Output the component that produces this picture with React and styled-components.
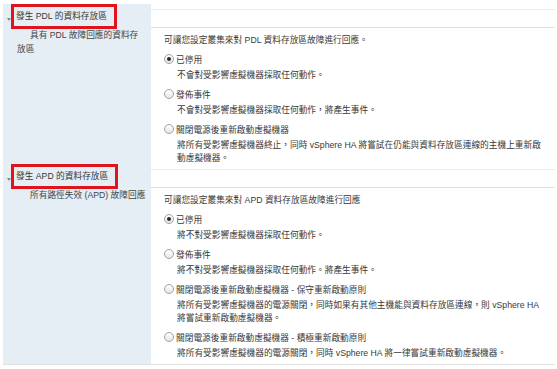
import React from "react";
import styled, { createGlobalStyle } from "styled-components";

const GlobalStyle = createGlobalStyle`
  body {
    margin: 0;
    background: #ffffff;
    font-family: "Liberation Sans", "Noto Sans CJK TC", sans-serif;
    font-size: 8.7px;
    color: #383838;
  }
`;

const Page = styled.div`
  padding: 4px 2px 0 3px;
`;

const Table = styled.div`
  background: linear-gradient(to right, #e5edf5 148px, #ffffff 148px);
  padding-top: 5px;
  border-bottom: 1px solid #e2e2e2;
`;

const HeaderRow = styled.div`
  display: grid;
  grid-template-columns: 148px 1fr;
  align-items: start;
`;

const HeaderCell = styled.div`
  display: flex;
  align-items: flex-start;
  padding-left: 4px;
`;

const Caret = styled.span`
  width: 0;
  height: 0;
  margin-top: 9px;
  border-left: 2.5px solid transparent;
  border-right: 2.5px solid transparent;
  border-top: 3px solid #8a8a8a;
`;

const TitleBox = styled.span`
  display: inline-block;
  border: 3px solid #e0141c;
  padding: 3px 7px 3px 2px;
  margin: -5px 0 -2px 0;
  line-height: 13px;
  white-space: nowrap;
`;

const Band = styled.div`
  height: 17px;
  border-top: 1px solid #ececec;
  border-bottom: 1px solid #dedede;
`;

const BodyRow = styled.div`
  display: grid;
  grid-template-columns: 148px 1fr;
`;

const SideLabel = styled.div`
  padding: 0 4px 0 14px;
  line-height: 14px;
  color: #444444;
  white-space: nowrap;

  & > span:first-child {
    padding-left: 13px;
  }
`;

const Content = styled.div`
  padding: 6px 2px 0 13px;
`;

const Intro = styled.div`
  line-height: 13px;
  margin-bottom: 4px;
`;

const Option = styled.div`
  margin-bottom: 4px;
`;

const OptionLabel = styled.div`
  display: flex;
  align-items: center;
  gap: 2px;
  height: 16px;
`;

const Radio = styled.span`
  box-sizing: border-box;
  width: 10px;
  height: 10px;
  border-radius: 50%;
  border: 1px solid #a3a3a3;
  background: linear-gradient(#ffffff, #e6e6e6);
  display: flex;
  align-items: center;
  justify-content: center;

  &::after {
    content: "";
    width: 4px;
    height: 4px;
    border-radius: 50%;
    background: ${(props) => (props.checked ? "#2b2b2b" : "transparent")};
  }
`;

const Desc = styled.div`
  padding-left: 13px;
  margin-top: 2px;
  line-height: 13px;
  white-space: nowrap;
`;

const Lines = ({ lines }) =>
  lines.map((line, i) => (
    <React.Fragment key={i}>
      {i > 0 && <br />}
      <span>{line}</span>
    </React.Fragment>
  ));

const sections = [
  {
    title: "發生 PDL 的資料存放區",
    label: ["具有 PDL 故障回應的資料存", "放區"],
    intro: "可讓您設定叢集來對 PDL 資料存放區故障進行回應。",
    options: [
      { name: "已停用", desc: ["不會對受影響虛擬機器採取任何動作。"], checked: true },
      { name: "發佈事件", desc: ["不會對受影響虛擬機器採取任何動作，將產生事件。"] },
      {
        name: "關閉電源後重新啟動虛擬機器",
        desc: [
          "將所有受影響虛擬機器終止，同時 vSphere HA 將嘗試在仍能與資料存放區連線的主機上重新啟",
          "動虛擬機器。",
        ],
      },
    ],
  },
  {
    title: "發生 APD 的資料存放區",
    label: ["所有路徑失效 (APD) 故障回應"],
    intro: "可讓您設定叢集來對 APD 資料存放區故障進行回應",
    options: [
      { name: "已停用", desc: ["將不對受影響虛擬機器採取任何動作。"], checked: true },
      { name: "發佈事件", desc: ["將不對受影響虛擬機器採取任何動作。將產生事件。"] },
      {
        name: "關閉電源後重新啟動虛擬機器 - 保守重新啟動原則",
        desc: [
          "將所有受影響虛擬機器的電源關閉，同時如果有其他主機能與資料存放區連線，則 vSphere HA",
          "將嘗試重新啟動虛擬機器。",
        ],
      },
      {
        name: "關閉電源後重新啟動虛擬機器 - 積極重新啟動原則",
        desc: ["將所有受影響虛擬機器的電源關閉，同時 vSphere HA 將一律嘗試重新啟動虛擬機器。"],
      },
    ],
  },
];

const App = () => {
  return (
    <Page>
      <GlobalStyle />
      <Table>
        {sections.map((section) => (
          <React.Fragment key={section.title}>
            <HeaderRow>
              <HeaderCell>
                <Caret />
                <TitleBox>{section.title}</TitleBox>
              </HeaderCell>
              <Band />
            </HeaderRow>
            <BodyRow>
              <SideLabel>
                <Lines lines={section.label} />
              </SideLabel>
              <Content>
                <Intro>{section.intro}</Intro>
                {section.options.map((opt) => (
                  <Option key={opt.name}>
                    <OptionLabel>
                      <Radio checked={opt.checked} />
                      <span>{opt.name}</span>
                    </OptionLabel>
                    <Desc>
                      <Lines lines={opt.desc} />
                    </Desc>
                  </Option>
                ))}
              </Content>
            </BodyRow>
          </React.Fragment>
        ))}
      </Table>
    </Page>
  );
};

export default App;
